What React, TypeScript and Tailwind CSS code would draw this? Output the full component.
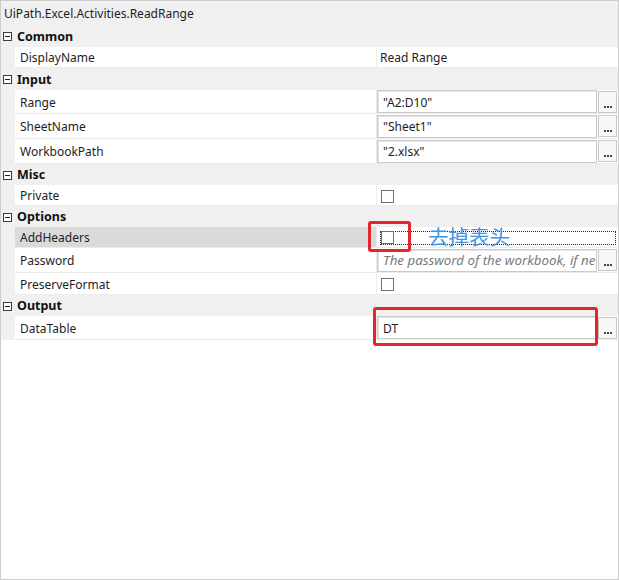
import React from "react";

// property grid, WPF-ish look
const FONT = "font-['Noto_Sans','Noto_Sans_CJK_SC',sans-serif]";

function Expander() {
  return (
    <svg width="9" height="9" viewBox="0 0 9 9" className="block">
      <rect x="0.5" y="0.5" width="8" height="8" fill="#fff" stroke="#3c3c3c" />
      <line x1="2" y1="4.5" x2="7" y2="4.5" stroke="#1e1e1e" />
    </svg>
  );
}

function Category({ label, h }: { label: string; h: string }) {
  return (
    <div className={`flex items-center bg-[#f0f0f0] ${h}`}>
      <div className="ml-[2px] mt-[1px]">
        <Expander />
      </div>
      <span className="ml-[5px] pt-[2px] text-[12.5px] font-bold text-[#111]">{label}</span>
    </div>
  );
}

function Row({
  name,
  h,
  selected,
  children,
}: {
  name: string;
  h: string;
  selected?: boolean;
  children?: React.ReactNode;
}) {
  return (
    <div className={`flex ${h}`}>
      <div className="w-[14px] shrink-0 bg-[#f0f0f0]" />
      <div
        className={`flex w-[362px] shrink-0 items-center border-b border-r border-[#ececec] pl-[5px] pt-[2px] text-[12px] text-[#1e1e1e] ${
          selected ? "bg-[#dadada]" : "bg-white"
        }`}
      >
        {name}
      </div>
      <div className="flex flex-1 items-center border-b border-[#ececec] bg-white">{children}</div>
    </div>
  );
}

function Dots() {
  return (
    <div className="flex h-[22px] w-[19px] items-end justify-center gap-[1px] border border-[#c9c9c9] bg-[#f7f7f7] pb-[4px]">
      <div className="h-[2px] w-[2px] bg-[#444]" />
      <div className="h-[2px] w-[2px] bg-[#444]" />
      <div className="h-[2px] w-[2px] bg-[#444]" />
    </div>
  );
}

function Box({ value, placeholder }: { value?: string; placeholder?: string }) {
  return (
    <div className="flex items-center gap-[1px]">
      <div className="flex h-[23px] w-[220px] items-center overflow-hidden whitespace-nowrap border border-[#cacaca] bg-white pl-[5px] pt-[2px] text-[12px] text-[#1e1e1e] shadow-[inset_1px_1px_0_#e6e6e6]">
        {value ?? <span className="text-[13.3px] italic text-[#7a7a7a]">{placeholder}</span>}
      </div>
      <Dots />
    </div>
  );
}

function Check() {
  return <div className="h-[13px] w-[13px] border border-[#707070] bg-white" />;
}

export default function App() {
  return (
    <div className={`relative h-[580px] w-[619px] border border-[#cdcdcd] bg-white ${FONT}`}>
      <div className="flex h-[24px] items-center bg-[#f0f0f0] pl-[3px] pt-[1px] text-[12px] text-[#1e1e1e]">
        UiPath.Excel.Activities.ReadRange
      </div>

      <Category label="Common" h="h-[22px]" />
      <Row name="DisplayName" h="h-[21px]">
        <span className="pl-[3px] pt-[2px] text-[12px] text-[#1e1e1e]">Read Range</span>
      </Row>

      <Category label="Input" h="h-[22px]" />
      <Row name="Range" h="h-[24px]">
        <Box value={'"A2:D10"'} />
      </Row>
      <Row name="SheetName" h="h-[25px]">
        <Box value={'"Sheet1"'} />
      </Row>
      <Row name="WorkbookPath" h="h-[25px]">
        <Box value={'"2.xlsx"'} />
      </Row>

      <Category label="Misc" h="h-[21px]" />
      <Row name="Private" h="h-[21px]">
        <div className="pl-[4px] pt-[2px]">
          <Check />
        </div>
      </Row>

      <Category label="Options" h="h-[21px]" />
      <Row name="AddHeaders" h="h-[21px]" selected>
        <div className="ml-[3px] mr-[2px] mt-[1px] flex h-[14px] flex-1 items-center border border-dotted border-[#222]">
          <Check />
        </div>
      </Row>
      <Row name="Password" h="h-[25px]">
        <Box placeholder="The password of the workbook, if ne" />
      </Row>
      <Row name="PreserveFormat" h="h-[22px]">
        <div className="pl-[4px] pt-[2px]">
          <Check />
        </div>
      </Row>

      <Category label="Output" h="h-[21px]" />
      <Row name="DataTable" h="h-[24px]">
        <Box value="DT" />
      </Row>

      {/* annotations drawn over the grid */}
      <div className="absolute left-[367px] top-[220px] h-[31px] w-[43px] rounded-[3px] border-[3px] border-[#e3262b]" />
      <div className="absolute left-[427px] top-[223px] text-[20.5px] leading-[26px] text-[#3d94e6]">去掉表头</div>
      <div className="absolute left-[372px] top-[306px] h-[39px] w-[225px] rounded-[3px] border-[3px] border-[#e3262b]" />
    </div>
  );
}
